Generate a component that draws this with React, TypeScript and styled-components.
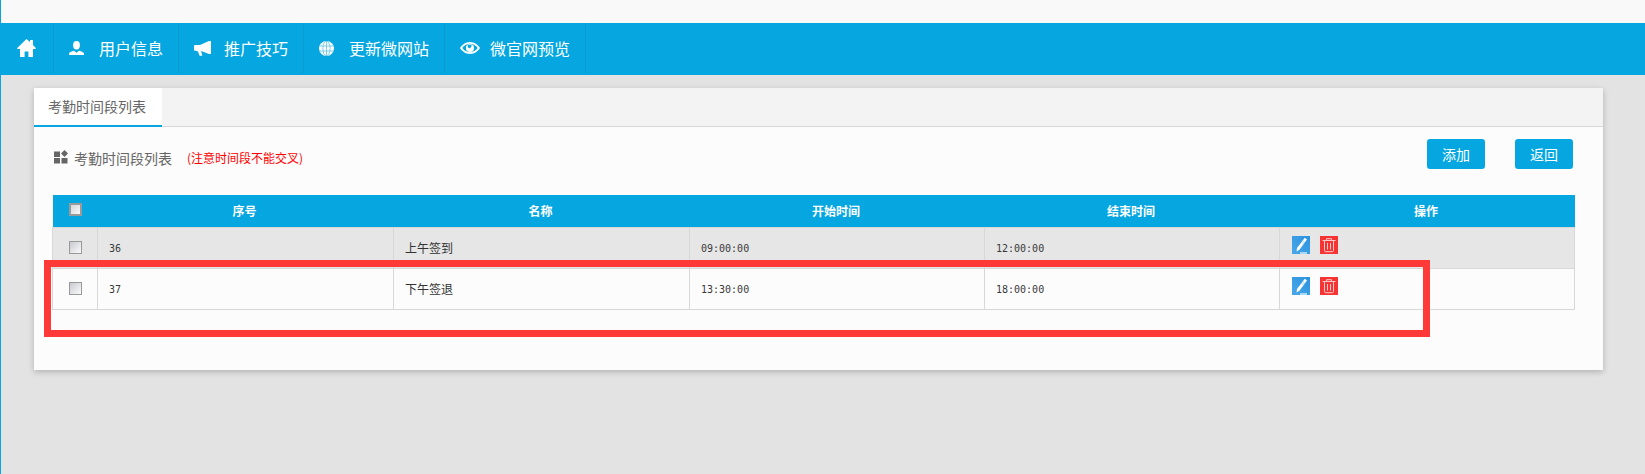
import React from "react";
import styled, { createGlobalStyle } from "styled-components";

const BLUE = "#06a7e1";
const CJK = `"Noto Sans CJK SC", "Liberation Sans", sans-serif`;

const Global = createGlobalStyle`
  html, body { margin: 0; padding: 0; background: #e3e3e3; }
  body { font-family: ${CJK}; overflow: hidden; }
`;

const Page = styled.div`
  position: relative;
  width: 1645px;
  height: 474px;
  box-sizing: border-box;
  border-left: 1px solid ${BLUE};
  background: #e3e3e3;
`;
const TopStrip = styled.div`
  height: 23px;
  background: #f9f9f9;
`;
const Nav = styled.nav`
  display: flex;
  height: 52px;
  margin-left: -1px;
  background: ${BLUE};
`;
const NavItem = styled.a`
  display: flex;
  align-items: center;
  height: 50px;
  box-sizing: border-box;
  padding: 0 15px;
  border-right: 1px solid #0a9bd2;
  color: #fff;
  font-size: 16px;
  line-height: 50px;
  white-space: nowrap;
`;
const HomeItem = styled(NavItem)`
  width: 54px;
  padding: 0 0 0 17px;
`;
const NavIcon = styled.span`
  display: flex;
  align-items: center;
  width: 30px;
  height: 50px;
  flex: none;
`;
const Main = styled.main`
  padding: 13px 42px 0 33px;
`;
const Card = styled.section`
  height: 282px;
  background: #fcfcfc;
  box-shadow: 0 2px 6px rgba(0, 0, 0, 0.22);
`;
const TabBar = styled.div`
  display: flex;
  height: 39px;
  box-sizing: border-box;
  background: #f3f3f3;
  border-bottom: 1px solid #d8d8d8;
`;
const Tab = styled.div`
  height: 39px;
  box-sizing: border-box;
  padding: 0 16px 0 14px;
  background: #fff;
  border-bottom: 2px solid ${BLUE};
  color: #666;
  font-size: 14px;
  line-height: 37px;
`;
const Body = styled.div`
  padding: 12px 30px 0 18px;
`;
const Toolbar = styled.div`
  display: flex;
  align-items: center;
  height: 30px;
`;
const Title = styled.h2`
  display: flex;
  align-items: center;
  margin: 8px 0 0 2px;
  color: #666;
  font-size: 14px;
  font-weight: 400;
  line-height: 20px;
`;
const TitleIcon = styled.svg`
  width: 14px;
  height: 14px;
  margin: -2px 6px 0 0;
`;
const Note = styled.span`
  margin-left: 15px;
  color: #f00;
  font-size: 12px;
  line-height: 20px;
`;
const Actions = styled.div`
  display: flex;
  gap: 30px;
  margin-left: auto;
`;
const Button = styled.button`
  width: 58px;
  height: 30px;
  padding: 0;
  border: 0;
  border-radius: 3px;
  background: ${BLUE};
  color: #fff;
  font-family: ${CJK};
  font-size: 14px;
  line-height: 30px;
`;
const Table = styled.table`
  width: 1522px;
  margin-top: 26px;
  table-layout: fixed;
  border-collapse: collapse;
`;
const Th = styled.th<{ $w: number }>`
  width: ${(p) => p.$w}px;
  height: 32px;
  box-sizing: border-box;
  padding: 0;
  background: ${BLUE};
  color: #fff;
  font-size: 12px;
  font-weight: 700;
  line-height: 32px;
  text-align: center;
`;
const NameTh = styled(Th)`
  padding-right: 2px;
`;
const Tr = styled.tr<{ $odd: boolean }>`
  height: 41px;
  background: ${(p) => (p.$odd ? "#e6e6e6" : "#fcfcfc")};
`;
const Td = styled.td`
  box-sizing: border-box;
  padding: 0 11px;
  border: 1px solid #d8d8d8;
  color: #333;
  font-size: 12px;
  line-height: 20px;
`;
const NumTd = styled(Td)`
  padding-top: 2px;
  font-family: "DejaVu Sans Mono", monospace;
  font-size: 10px;
  color: #3a3a3a;
`;
const CheckTd = styled(Td)`
  padding: 0;
  text-align: center;
`;
const OpTd = styled(Td)`
  vertical-align: top;
  padding: 8px 12px 0;
`;
const Check = styled.span`
  display: block;
  width: 13px;
  height: 13px;
  box-sizing: border-box;
  margin: -1px 0 0 16px;
  border: 1px solid #999;
  background: linear-gradient(135deg, #c8cad0, #fbfbfb);
`;
const HeadCheck = styled(Check)`
  margin: -3px 0 0 16px;
  border-color: #9a9a9a;
  box-shadow: inset 0 0 0 1px #9a9a9a;
  background: linear-gradient(135deg, #d0d2d6, #fdfdfd);
`;
const Ops = styled.div`
  display: flex;
  gap: 10px;
`;
const OpIcon = styled.svg`
  display: block;
  width: 18px;
  height: 18px;
`;
const Annotation = styled.div`
  position: absolute;
  left: 43px;
  top: 260px;
  width: 1386px;
  height: 77px;
  box-sizing: border-box;
  border: 7px solid #ff3838;
  pointer-events: none;
`;

const HomeGlyph = () => (
  <svg width="19" height="18" viewBox="0 0 19 18" fill="#fff">
    <path d="M9.500 0 13 3V1h3v5l3 3.200-.8.8H16v8h-4.600v-5.500H7.600V18H3v-8H.8L0 9.200z" />
  </svg>
);
const UserGlyph = () => (
  <svg width="15" height="14" viewBox="0 0 15 14" fill="#fff">
    <ellipse cx="7.500" cy="4.200" rx="3.400" ry="4.200" />
    <path d="M0 14v-1.200c0-1.600 2.600-2.400 5-3l2.500 2 2.500-2c2.400.6 5 1.400 5 3V14z" />
  </svg>
);
const HornGlyph = () => (
  <svg width="17" height="15" viewBox="0 0 17 15" fill="#fff">
    <path d="M0 4.500 1 4l5 0 9-4h2v13h-2L7 10l1.400 4.800H5.600L4 10.500 1 9.500H0z" />
  </svg>
);
const GlobeGlyph = () => (
  <svg width="15" height="15" viewBox="0 0 15 15">
    <circle cx="7.500" cy="7.500" r="7.500" fill="#fff" />
    <g stroke="#6cc8ec" strokeWidth="0.9" fill="none">
      <path d="M0 5h15M0 10h15M7.500 0v15" />
      <ellipse cx="7.500" cy="7.500" rx="3.600" ry="7.500" />
    </g>
  </svg>
);
const EyeGlyph = () => (
  <svg width="20" height="12" viewBox="0 0 20 12">
    <path fill="#fff" d="M10 0c4.400 0 8 2.800 10 6-2 3.200-5.600 6-10 6S2 9.200 0 6c2-3.200 5.600-6 10-6z" />
    <path fill={BLUE} d="M10 1.800c3.300 0 6 1.900 7.600 4.200-1.600 2.300-4.300 4.200-7.600 4.200S4 8.300 2.400 6C4 3.700 6.700 1.800 10 1.800z" />
    <circle cx="10" cy="6" r="4" fill="#fff" />
    <path fill={BLUE} d="M8 2.800h3.500a2.600 2.600 0 0 1-3 3.300 3 3 0 0 1-.5-3.300z" />
  </svg>
);
const PencilIcon = () => (
  <OpIcon viewBox="0 0 18 18">
    <defs>
      <linearGradient id="pen" x1="0" y1="1" x2="1" y2="0">
        <stop offset="0" stopColor="#4aa8ea" />
        <stop offset="1" stopColor="#2a92de" />
      </linearGradient>
    </defs>
    <rect width="18" height="18" fill="url(#pen)" />
    <rect x="8" y="16" width="7" height="2" fill="#a9d8f5" />
    <path d="M12.800 1.800 15 3.600 7.600 13.400 4.600 15.600 5 12z" fill="#fff" />
    <path d="M11 5 13 6.600M9.800 6.500 11.800 8" stroke="#8cc9f0" strokeWidth="0.8" />
  </OpIcon>
);
const TrashIcon = () => (
  <OpIcon viewBox="0 0 18 18">
    <rect width="18" height="18" fill="#f73434" />
    <g fill="none" stroke="#ffc9c9" strokeWidth="1">
      <path d="M2.500 4.500h13M6.500 4.500V2.700h5v1.800M4.500 4.800v9.700c0 .8.500 1.200 1.200 1.200h6.600c.7 0 1.200-.4 1.200-1.200V4.800" />
      <path d="M7.500 7v6.500M10.500 7v6.500" />
    </g>
  </OpIcon>
);

const navItems = [
  { icon: <UserGlyph />, label: "用户信息" },
  { icon: <HornGlyph />, label: "推广技巧" },
  { icon: <GlobeGlyph />, label: "更新微网站" },
  { icon: <EyeGlyph />, label: "微官网预览" },
];
const rows = [
  { id: "36", name: "上午签到", start: "09:00:00", end: "12:00:00" },
  { id: "37", name: "下午签退", start: "13:30:00", end: "18:00:00" },
];

export default function App() {
  return (
    <Page>
      <Global />
      <TopStrip />
      <Nav>
        <HomeItem>
          <HomeGlyph />
        </HomeItem>
        {navItems.map((n) => (
          <NavItem key={n.label}>
            <NavIcon>{n.icon}</NavIcon>
            {n.label}
          </NavItem>
        ))}
      </Nav>
      <Main>
        <Card>
          <TabBar>
            <Tab>考勤时间段列表</Tab>
          </TabBar>
          <Body>
            <Toolbar>
              <Title>
                <TitleIcon viewBox="0 0 14 14" fill="#666">
                  <rect x="0" y="1.500" width="6" height="5.500" />
                  <rect x="0" y="8" width="6" height="5.500" />
                  <rect x="7.500" y="8" width="6" height="5.500" />
                  <path d="M10.500 0 14 3.500 10.500 7 7 3.500z" />
                </TitleIcon>
                考勤时间段列表
                <Note>(注意时间段不能交叉)</Note>
              </Title>
              <Actions>
                <Button>添加</Button>
                <Button>返回</Button>
              </Actions>
            </Toolbar>
            <Table>
              <thead>
                <tr>
                  <Th $w={45}>
                    <HeadCheck />
                  </Th>
                  <NameTh $w={296}>序号</NameTh>
                  <NameTh $w={296}>名称</NameTh>
                  <NameTh $w={295}>开始时间</NameTh>
                  <NameTh $w={295}>结束时间</NameTh>
                  <NameTh $w={295}>操作</NameTh>
                </tr>
              </thead>
              <tbody>
                {rows.map((r, i) => (
                  <Tr key={r.id} $odd={i === 0}>
                    <CheckTd>
                      <Check />
                    </CheckTd>
                    <NumTd>{r.id}</NumTd>
                    <Td>{r.name}</Td>
                    <NumTd>{r.start}</NumTd>
                    <NumTd>{r.end}</NumTd>
                    <OpTd>
                      <Ops>
                        <PencilIcon />
                        <TrashIcon />
                      </Ops>
                    </OpTd>
                  </Tr>
                ))}
              </tbody>
            </Table>
          </Body>
        </Card>
      </Main>
      <Annotation />
    </Page>
  );
}
